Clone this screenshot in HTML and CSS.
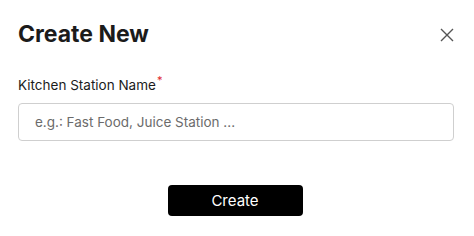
FILE: index.html
```html
<!DOCTYPE html>
<html lang="en">
<head>
	<meta charset="utf-8">
	<title>Create New</title>
	<link rel="stylesheet" href="styles.css">
</head>
<body>
<div class="modal">
	<header class="modal-head">
		<h1>Create New</h1>
		<button class="close" type="button" aria-label="Close">
			<svg width="14" height="14" viewBox="0 0 14 14"><path d="M1 1L13 13M13 1L1 13" stroke="#555" stroke-width="1.4" fill="none"/></svg>
		</button>
	</header>
	<form class="modal-body">
		<label for="stationName" class="field-label">Kitchen Station Name<span class="req">*</span></label>
		<input type="text" id="stationName" placeholder="e.g.: Fast Food, Juice Station ...">
		<div class="actions">
			<button type="button" class="btn-create">Create</button>
		</div>
	</form>
</div>
</body>
</html>
```
FILE: styles.css
```css
html {
	font-family: Inter, "Liberation Sans", sans-serif;
	color: #1b1b1b;
	background-color: white;
}
body { margin: 0; }
.modal {
	width: 474px;
	height: 236px;
	box-sizing: border-box;
	padding: 21px 20px 0 18px;
}
.modal-head {
	display: flex;
	justify-content: space-between;
	align-items: center;
}
h1 {
	margin: 0;
	font-size: 23px;
	font-weight: 700;
	line-height: 27px;
}
.close {
	border: none;
	background: none;
	padding: 0;
	width: 14px;
	height: 14px;
	display: flex;
}
.modal-body {
	display: flex;
	flex-direction: column;
	margin-top: 28px;
}
.field-label {
	font-size: 13.5px;
	line-height: 18px;
}
.req {
	color: #e0282e;
	font-size: 11px;
	line-height: 0;
	vertical-align: 6px;
	margin-left: 1px;
}
input {
	margin-top: 9px;
	height: 38px;
	box-sizing: border-box;
	border: 1px solid #cfcfcf;
	border-radius: 4px;
	padding: 0 16px;
	font-family: Inter, "Liberation Sans", sans-serif;
	font-size: 13.5px;
	color: #333;
}
input::placeholder { color: #6b6b6b; }
.actions {
	display: flex;
	justify-content: center;
	margin-top: 44px;
	padding-right: 2px;
}
.btn-create {
	width: 135px;
	height: 31px;
	border: none;
	border-radius: 4px;
	background-color: black;
	color: white;
	font-family: Inter, "Liberation Sans", sans-serif;
	font-size: 15px;
}
```
